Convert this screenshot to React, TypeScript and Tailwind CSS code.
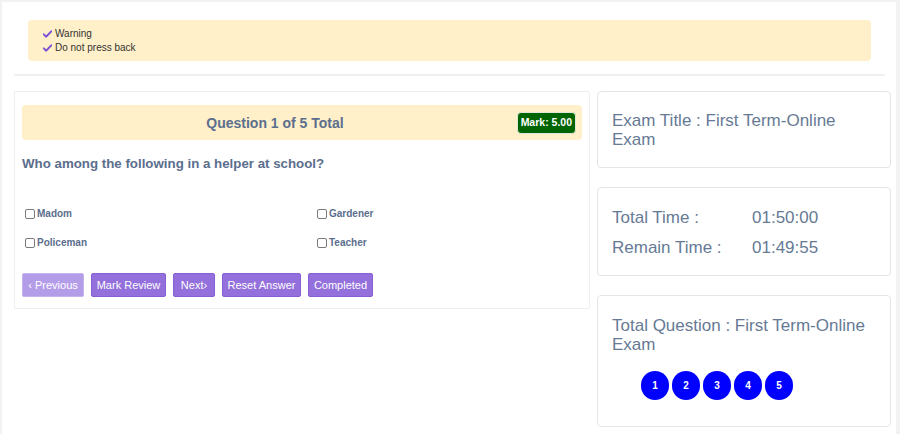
import React from 'react';

const font = { fontFamily: '"Liberation Sans", Arial, sans-serif' };

const options = ['Madom', 'Gardener', 'Policeman', 'Teacher'];

const Check = () => (
  <svg width="9" height="8" viewBox="0 0 12 10" className="shrink-0">
    <path d="M1 5.5 L4.3 8.6 L11 1.4" fill="none" stroke="#7d4fd6" strokeWidth="2.6" strokeLinecap="round" strokeLinejoin="round" />
  </svg>
);

const Box = () => (
  <span className="inline-block w-[10px] h-[10px] border border-[#7b7b7b] rounded-[2px] bg-white shrink-0" />
);

const Card: React.FC<{ className?: string; children: React.ReactNode }> = ({ className = '', children }) => (
  <div className={`border border-[#e5e5e5] rounded-[4px] bg-white ${className}`}>{children}</div>
);

const App: React.FC = () => {
  return (
    <div style={font} className="min-h-screen bg-[#f2f2f2] pt-[2px] pl-[2px] pr-[4px]">
      <div className="bg-white min-h-[432px]">
        <div className="pl-[26px] pt-[18px]">
          <div className="w-[843px] h-[41px] rounded-[4px] bg-[#fff0c9] pl-[15px] pt-[7px] text-[10px] leading-[14px] text-[#333]">
            <div className="flex items-center gap-[3px]"><Check />Warning</div>
            <div className="flex items-center gap-[3px]"><Check />Do not press back</div>
          </div>
        </div>

        <div className="mt-[13px] ml-[12px] w-[871px] border-t-2 border-[#f0f0f0]" />

        <div className="mt-[15px] ml-[12px] flex gap-[7px]">
          {/* question panel */}
          <div className="w-[576px] h-[218px] border border-[#eeeeee] rounded-[2px] px-[7px] pt-[13px]">
            <div className="relative h-[35px] rounded-[4px] bg-[#fff0c9] flex items-center justify-center pr-[54px]">
              <span className="text-[14px] font-bold text-[#5b6e8d] mt-[1px]">Question 1 of 5 Total</span>
              <span className="absolute right-[6px] top-[7px] h-[22px] px-[3px] rounded-[4px] bg-[#006400] text-white text-[10.5px] font-bold flex items-center border border-[#dfe8d8]">
                Mark: 5.00
              </span>
            </div>
            <div className="mt-[14px] text-[13.3px] font-bold text-[#5b6e8d]">Who among the following in a helper at school?</div>

            <div className="mt-[34px] grid grid-cols-[292px_1fr] gap-y-[17px] pl-[3px] text-[10px] font-bold text-[#5b6e8d]">
              {options.map((o) => (
                <label key={o} className="flex items-center gap-[2px] h-[12px]">
                  <Box />
                  {o}
                </label>
              ))}
            </div>

            <div className="mt-[24px] flex gap-[7px] text-[11px] text-white">
              <button className="h-[24px] w-[62px] rounded-[2px] bg-[#b39ce8] border border-[#c4b2ee]">‹ Previous</button>
              <button className="h-[24px] w-[75px] rounded-[2px] bg-[#9370db] border border-[#8660d4]">Mark Review</button>
              <button className="h-[24px] w-[42px] rounded-[2px] bg-[#9370db] border border-[#8660d4]">Next›</button>
              <button className="h-[24px] w-[79px] rounded-[2px] bg-[#9370db] border border-[#8660d4]">Reset Answer</button>
              <button className="h-[24px] w-[65px] rounded-[2px] bg-[#9370db] border border-[#8660d4]">Completed</button>
            </div>
          </div>

          {/* side panel */}
          <div className="w-[294px] flex flex-col gap-[19px] text-[#667a95] text-[17px] leading-[19px]">
            <Card className="h-[77px] pl-[14px] pt-[19px] pr-[20px]">
              Exam Title : First Term-Online Exam
            </Card>
            <Card className="h-[89px] pl-[14px] pt-[19px]">
              <div className="flex h-[20px] items-center">
                <span className="w-[140px]">Total Time :</span>
                <span>01:50:00</span>
              </div>
              <div className="flex h-[20px] items-center mt-[10px]">
                <span className="w-[140px]">Remain Time :</span>
                <span>01:49:55</span>
              </div>
            </Card>
            <Card className="h-[132px] pl-[14px] pt-[20px] pr-[16px]">
              <div>Total Question : First Term-Online Exam</div>
              <div className="mt-[17px] ml-[29px] flex gap-[3px]">
                {[1, 2, 3, 4, 5].map((n) => (
                  <span key={n} className="w-[28px] h-[29px] rounded-full bg-[#0000ff] text-white text-[10px] font-bold flex items-center justify-center leading-none">
                    {n}
                  </span>
                ))}
              </div>
            </Card>
          </div>
        </div>
      </div>
    </div>
  );
};

export default App;
